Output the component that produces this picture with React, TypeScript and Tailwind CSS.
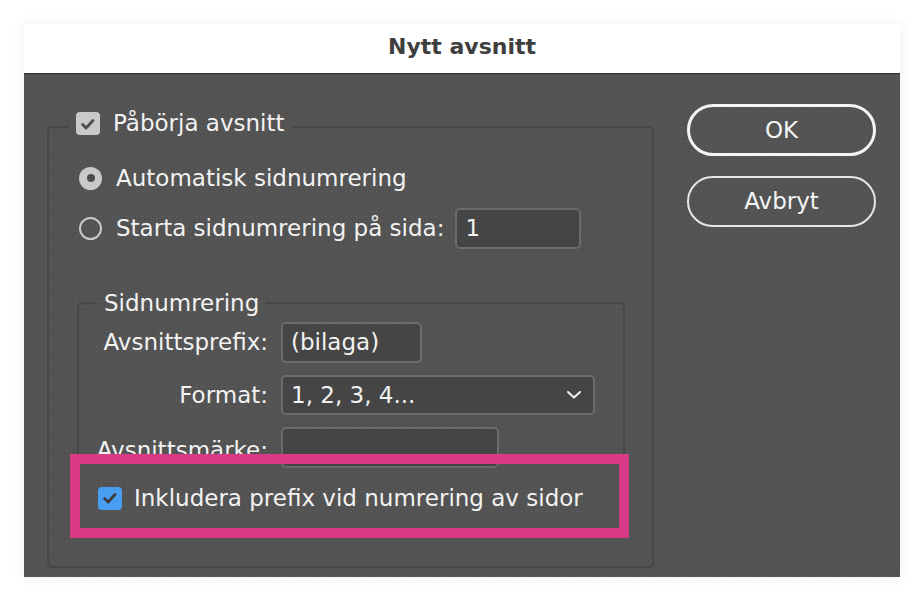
import React from 'react';

const font = { fontFamily: '"DejaVu Sans", "Liberation Sans", sans-serif' };

function Check({ className }: { className: string }) {
  return (
    <svg viewBox="0 0 24 24" className={className} fill="none">
      <path d="M5.5 12.5l4.2 4.2 8.3-9" stroke="currentColor" strokeWidth="3.4" strokeLinecap="round" strokeLinejoin="round" />
    </svg>
  );
}

function Field({ w, h, value, chevron }: { w: string; h: string; value?: string; chevron?: boolean }) {
  return (
    <div className={`${w} ${h} flex items-center justify-between rounded-[5px] border-2 border-[#6b6b6b] bg-[#454545] pl-[8px] pr-[12px] text-[23px] text-[#f2f2f2]`}>
      <span>{value}</span>
      {chevron && (
        <svg viewBox="0 0 14 8" className="h-[8px] w-[14px]" fill="none">
          <path d="M1 1l6 5.5L13 1" stroke="#f2f2f2" strokeWidth="2" strokeLinecap="round" strokeLinejoin="round" />
        </svg>
      )}
    </div>
  );
}

export default function App() {
  return (
    <div className="min-h-screen w-full bg-white pl-[24px] pt-[24px]" style={font}>
      <div className="w-[876px] shadow-[0_0_14px_rgba(0,0,0,0.07)]">
        {/* title bar */}
        <div className="flex h-[50px] items-center justify-center border-b border-[#2e2e2e] bg-white pb-[4px] text-[22px] font-bold text-[#3e3e3e]">
          Nytt avsnitt
        </div>

        {/* body */}
        <div className="flex h-[503px] items-start bg-[#535353] bg-[radial-gradient(circle,rgba(255,255,255,0.07)_0.8px,transparent_1px)] bg-[length:5px_5px] pl-[23px] pr-[24px] text-[23px] text-[#f2f2f2]">
          <fieldset className="mt-[38px] w-[607px] rounded-[5px] border-2 border-[#474747] p-0">
            <legend className="ml-[20px] flex h-[30px] items-center gap-[13px] px-[7px] pb-[7px]">
              <span className="flex h-[23px] w-[24px] items-center justify-center rounded-[4px] bg-[#c9c9c9]">
                <Check className="h-[20px] w-[20px] text-[#4e4e4e]" />
              </span>
              <span>Påbörja avsnitt</span>
            </legend>

            <div className="pl-[28px] pr-[27px] pb-[28px]">
              <div className="ml-[2px] mt-[21px] flex h-[30px] items-center gap-[14px]">
                <span className="flex h-[23px] w-[23px] items-center justify-center rounded-full bg-[#c9c9c9]">
                  <span className="h-[8px] w-[8px] rounded-full bg-[#4e4e4e]" />
                </span>
                <span>Automatisk sidnumrering</span>
              </div>

              <div className="ml-[2px] mt-[15px] flex h-[41px] items-center">
                <span className="h-[23px] w-[23px] rounded-full border-2 border-[#c9c9c9]" />
                <span className="ml-[14px] mr-[11px]">Starta sidnumrering på sida:</span>
                <Field w="w-[126px]" h="h-[41px]" value="1" />
              </div>

              <fieldset className="mt-[40px] rounded-[5px] border-2 border-[#474747] p-0">
                <legend className="ml-[18px] h-[28px] px-[7px] leading-[28px]">Sidnumrering</legend>

                <div className="pb-[8px]">
                  <div className="mt-[5px] flex items-center gap-[13px]">
                    <span className="w-[189px] text-right">Avsnittsprefix:</span>
                    <Field w="w-[141px]" h="h-[41px]" value="(bilaga)" />
                  </div>
                  <div className="mt-[12px] flex items-center gap-[13px]">
                    <span className="w-[189px] text-right">Format:</span>
                    <Field w="w-[314px]" h="h-[40px]" value="1, 2, 3, 4..." chevron />
                  </div>
                  <div className="mt-[12px] flex items-center gap-[13px]">
                    <span className="w-[189px] whitespace-nowrap pt-[5px] text-right">Avsnittsmärke:</span>
                    <Field w="w-[218px]" h="h-[41px]" />
                  </div>

                  <div className="relative -mt-[4px] flex h-[64px] items-center gap-[12px] pl-[19px] pt-[4px]">
                    <span className="flex h-[23px] w-[24px] items-center justify-center rounded-[4px] bg-[#4a9ef2]">
                      <Check className="h-[20px] w-[20px] text-[#3c3c3c]" />
                    </span>
                    <span>Inkludera prefix vid numrering av sidor</span>
                    {/* highlight frame */}
                    <div className="pointer-events-none absolute -bottom-[10px] -left-[9px] -right-[6px] -top-[10px] border-[10px] border-[#d83a86]" />
                  </div>
                </div>
              </fieldset>
            </div>
          </fieldset>

          <div className="ml-[33px] mt-[30px] flex w-[189px] flex-col gap-[20px]">
            <button className="flex h-[52px] items-center justify-center rounded-full border-[3px] border-[#f4f4f4] text-[23px] text-[#f4f4f4]">
              OK
            </button>
            <button className="flex h-[51px] items-center justify-center rounded-full border-2 border-[#e6e6e6] text-[23px] text-[#f4f4f4]">
              Avbryt
            </button>
          </div>
        </div>
      </div>
    </div>
  );
}
